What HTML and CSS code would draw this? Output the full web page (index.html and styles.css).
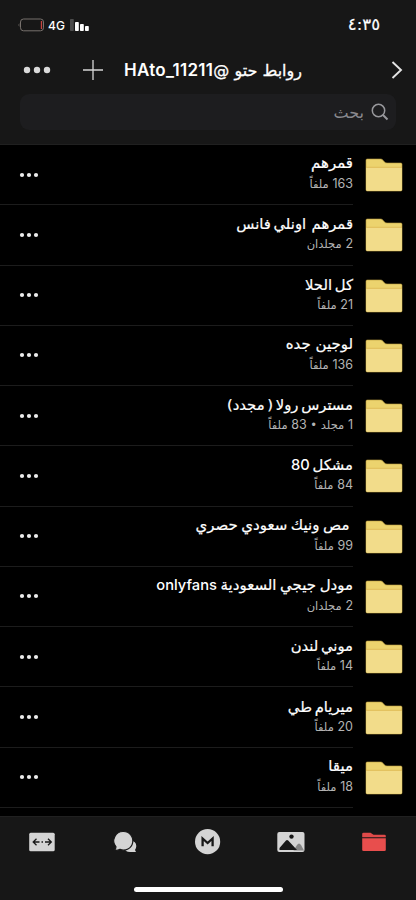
FILE: index.html
```
<!DOCTYPE html>
<html lang="ar" dir="rtl">
<head>
<meta charset="utf-8">
<title>روابط حتو</title>
<link rel="stylesheet" href="styles.css">
</head>
<body>
<svg width="0" height="0" class="defs" aria-hidden="true">
  <symbol id="folder" viewBox="0 0 38 34">
    <path d="M1 2.2Q1 1 2.2 1H15.500Q17 1 18 2.200L19.500 4Q20.500 5 22 5H35.800Q37 5 37 6.200V31.800Q37 33 35.800 33H2.200Q1 33 1 31.800Z" fill="#ecd36e" stroke="#b99b3c" stroke-width=".6"/>
    <path d="M1.200 9.400H36.800V31.800Q36.800 32.800 35.800 32.800H2.200Q1.200 32.800 1.200 31.800Z" fill="#f2dc8a"/>
    <path d="M1 9.300H37" stroke="#dcb650" stroke-width=".8"/>
  </symbol>
  <symbol id="dots" viewBox="0 0 20 6"><g fill="#ececec"><circle cx="3" cy="3" r="2.100"/><circle cx="10" cy="3" r="2.100"/><circle cx="17" cy="3" r="2.100"/></g></symbol>
</svg>
<div class="screen">
  <header>
    <div class="status">
      <span class="time" dir="ltr">٤:٣٥</span>
      <div class="signal" dir="ltr">
        <svg width="28" height="14" viewBox="0 0 28 14"><rect x="3.500" y="1" width="23" height="11.800" rx="3" fill="none" stroke="#77716d"/><path d="M2.300 5Q.6 7 2.300 9Z" fill="#77716d"/><rect x="23.800" y="3" width="1.300" height="8" fill="#c54440"/></svg>
        <span>4G</span>
        <svg width="20" height="13" viewBox="0 0 20 13"><rect x="0" y="0" width="3.800" height="12" rx=".8" fill="#4b4b4b"/><g fill="#fff"><rect x="5" y="3" width="3.800" height="9" rx=".8"/><rect x="10" y="5" width="3.800" height="7" rx=".8"/><rect x="15" y="7" width="3.800" height="5" rx=".8"/></g></svg>
      </div>
    </div>
    <nav class="bar">
      <svg class="back" width="12" height="20" viewBox="0 0 12 20"><path d="M1.500 2L10 10L1.500 18" fill="none" stroke="#e4e4e4" stroke-width="1.900"/></svg>
      <h1>روابط حتو @<b>HAto_11211</b></h1>
      <svg class="plus" width="20" height="20" viewBox="0 0 20 20"><path d="M10 0V20M0 10H20" stroke="#d6d6d6" stroke-width="1.300"/></svg>
      <svg class="more" width="28" height="8" viewBox="0 0 28 8"><g fill="#dadada"><circle cx="4" cy="4" r="3.200"/><circle cx="14" cy="4" r="3.200"/><circle cx="24" cy="4" r="3.200"/></g></svg>
    </nav>
    <div class="search">
      <svg width="18" height="18" viewBox="0 0 18 18" fill="none" stroke="#98989c"><circle cx="7.500" cy="7.500" r="6.200" stroke-width="1.500"/><path d="M12 12L16.500 16.500" stroke-width="2"/></svg>
      <span>بحث</span>
    </div>
  </header>
  <ul class="list">
    <li><svg class="folder"><use href="#folder"/></svg><div class="info"><div class="text"><h2>قمرهم</h2><p><b>163</b> ملفاً</p></div><svg class="dots"><use href="#dots"/></svg></div></li>
    <li><svg class="folder"><use href="#folder"/></svg><div class="info"><div class="text"><h2 class="tight">قمرهم&nbsp; اونلي فانس</h2><p><b>2</b> مجلدان</p></div><svg class="dots"><use href="#dots"/></svg></div></li>
    <li><svg class="folder"><use href="#folder"/></svg><div class="info"><div class="text"><h2 class="tight">كل الحلا</h2><p><b>21</b> ملفاً</p></div><svg class="dots"><use href="#dots"/></svg></div></li>
    <li><svg class="folder"><use href="#folder"/></svg><div class="info"><div class="text"><h2>لوجين جده</h2><p><b>136</b> ملفاً</p></div><svg class="dots"><use href="#dots"/></svg></div></li>
    <li><svg class="folder"><use href="#folder"/></svg><div class="info"><div class="text"><h2 class="tight">مسترس رولا ( مجدد)</h2><p><b>1</b> مجلد • <b>83</b> ملفاً</p></div><svg class="dots"><use href="#dots"/></svg></div></li>
    <li><svg class="folder"><use href="#folder"/></svg><div class="info"><div class="text"><h2 class="tight">مشكل <b>80</b></h2><p><b>84</b> ملفاً</p></div><svg class="dots"><use href="#dots"/></svg></div></li>
    <li><svg class="folder"><use href="#folder"/></svg><div class="info"><div class="text"><h2 class="snug">&nbsp;مص ونيك سعودي حصري</h2><p><b>99</b> ملفاً</p></div><svg class="dots"><use href="#dots"/></svg></div></li>
    <li><svg class="folder"><use href="#folder"/></svg><div class="info"><div class="text"><h2 class="snug">مودل جيجي السعودية <b>onlyfans</b></h2><p><b>2</b> مجلدان</p></div><svg class="dots"><use href="#dots"/></svg></div></li>
    <li><svg class="folder"><use href="#folder"/></svg><div class="info"><div class="text"><h2 class="tight">موني لندن</h2><p><b>14</b> ملفاً</p></div><svg class="dots"><use href="#dots"/></svg></div></li>
    <li><svg class="folder"><use href="#folder"/></svg><div class="info"><div class="text"><h2 class="tight">ميريام طي</h2><p><b>20</b> ملفاً</p></div><svg class="dots"><use href="#dots"/></svg></div></li>
    <li><svg class="folder"><use href="#folder"/></svg><div class="info"><div class="text"><h2>ميقا</h2><p><b>18</b> ملفاً</p></div><svg class="dots"><use href="#dots"/></svg></div></li>
  </ul>
  <footer>
    <div class="tabs">
      <svg viewBox="0 0 28 28"><path d="M2.200 6Q2.200 4.700 3.500 4.700H10.500L13.500 6.700H24.500Q25.800 6.700 25.800 8V9.300H2.200Z" fill="#e04a49"/><path d="M2.200 10.200H25.800V21.700Q25.800 23 24.500 23H3.500Q2.200 23 2.200 21.700Z" fill="#e84e4d"/></svg>
      <svg viewBox="0 0 28 28"><rect x=".3" y="4" width="27.200" height="20" rx="2" fill="#d4d4d4"/><path d="M16.500 22.500L20 17Q22 14 24 17L27 22.500Z" fill="#858585"/><path d="M2.500 22V20L9 12.500Q10 11.300 11.200 12.500L20 22Z" fill="#181818"/><circle cx="14.500" cy="8.600" r="2.200" fill="#181818"/></svg>
      <svg viewBox="0 0 28 28"><circle cx="13.600" cy="13.700" r="12.600" fill="#d4d4d4"/><path d="M8.600 18.200V10.500L13.600 15L18.600 10.500V18.200" fill="none" stroke="#181818" stroke-width="2.300"/></svg>
      <svg viewBox="0 0 28 28"><path d="M19 13Q25 12.500 25.300 18Q25.200 20.500 24 22L25 24H19Q14 24 13.500 20Z" fill="#d4d4d4"/><path d="M12.500 3.500A9.300 9.300 0 1 1 9 21.400Q6.500 22.600 3.300 22.300Q5 21 5 18.800A9.300 9.300 0 0 1 12.500 3.500Z" fill="#d4d4d4" stroke="#181818" stroke-width="1.200"/></svg>
      <svg viewBox="0 0 28 28"><rect x="1.200" y="4.700" width="25.500" height="18.500" rx="1.500" fill="#d4d4d4"/><g fill="none" stroke="#181818" stroke-width="1.300"><path d="M8.500 10.800L5.200 14L8.500 17.200M5.500 14H11.500M20 10.800L23.300 14L20 17.200M23 14H17"/><path d="M13.500 14H15"/></g></svg>
    </div>
    <div class="home"></div>
  </footer>
</div>
</body>
</html>
```
FILE: styles.css
```
* { box-sizing: border-box; margin: 0; padding: 0; }
html { background: #171717; }
body { background: #000; color: #fff; font-family: "DejaVu Sans", sans-serif; }
.defs { position: absolute; }
.screen { width: 416px; height: 900px; display: flex; flex-direction: column; overflow: hidden; }
svg { display: block; flex: none; }
b { font-family: Inter, sans-serif; font-weight: inherit; }

header { height: 145px; flex: none; background: #171717; border-bottom: 1px solid #202020; }
.status { height: 50px; display: flex; justify-content: space-between; align-items: flex-end; padding: 0 36px 18px 17px; }
.time { font-size: 16.500px; line-height: 15px; -webkit-text-stroke: .2px #fff; }
.signal { display: flex; align-items: center; height: 14px; font: 500 12px Inter, sans-serif; }
.signal span { width: 25px; padding-left: 3px; }
.bar { height: 40px; display: flex; align-items: center; padding: 0 13px 0 23px; }
h1 { width: 178px; margin-right: 89px; font-size: 16px; line-height: 24px; font-weight: 400; white-space: nowrap; -webkit-text-stroke: .3px #fff; }
h1 b { font-size: 17px; font-weight: 600; letter-spacing: .3px; -webkit-text-stroke: 0; }
.plus { margin-right: 21px; }
.more { margin-right: 32px; }
.search { height: 36px; margin: 4px 20px 0; padding: 0 7px; border-radius: 9px; background: #1d1d1f; display: flex; align-items: center; gap: 7px; color: #8a8a8e; font-size: 16px; }

.list { list-style: none; height: 671px; flex: none; overflow: hidden; }
li { height: 60.270px; display: flex; align-items: center; padding-right: 13px; }
.folder { width: 38px; height: 34px; margin-left: 12px; }
.info { flex: 1; height: 100%; display: flex; justify-content: space-between; align-items: center; padding-left: 19px; border-bottom: 1px solid #1c1c1c; }
.text { padding-bottom: 3px; }
h2 { height: 21px; font-size: 15px; line-height: 21px; font-weight: 400; white-space: nowrap; -webkit-text-stroke: .2px #fff; }
h2.tight { font-size: 14.800px; word-spacing: -2px; }
h2.snug { word-spacing: -1.200px; }
h2 b { font-weight: 500; font-size: 14.700px; -webkit-text-stroke: 0; }
p { height: 19px; font-size: 11.500px; line-height: 19px; color: #b4b4b4; white-space: nowrap; }
p b { font-size: 12.500px; }
.dots { width: 20px; height: 6px; }

footer { flex: 1; background: #171717; border-top: 1px solid #202020; display: flex; flex-direction: column; align-items: center; }
.tabs { width: 100%; display: grid; grid-template-columns: repeat(5, 1fr); justify-items: center; padding-top: 11px; }
.tabs svg { width: 28px; height: 28px; }
.home { width: 149px; height: 5px; margin-top: 31px; border-radius: 3px; background: #fff; }
```
